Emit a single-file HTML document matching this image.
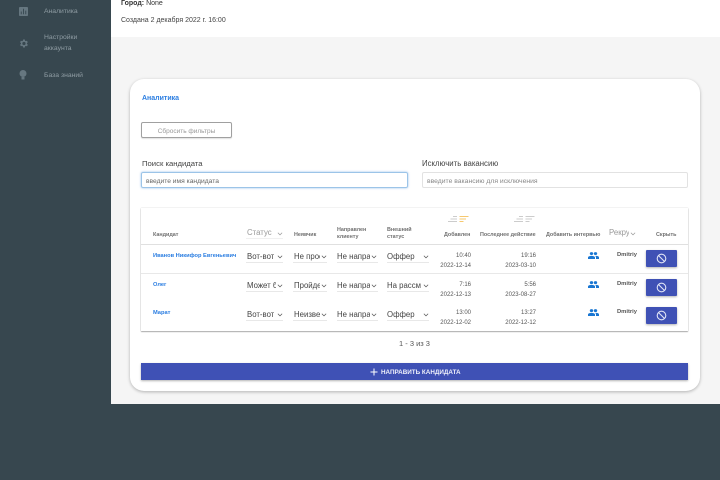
<!DOCTYPE html>
<html lang="ru"><head><meta charset="utf-8"><title>Аналитика</title>
<style>
*{box-sizing:border-box}
html,body{margin:0;padding:0;width:720px;height:480px;overflow:hidden;background:#37474f;font-family:"Liberation Sans","DejaVu Sans",sans-serif}
div,svg{position:absolute}
.t{white-space:nowrap;line-height:1}
.side{color:#8f9ca3;font-size:6.800px}
.lab{color:#707070;font-size:5.400px;font-weight:bold}
.sel{font-size:7.800px;color:#444;overflow:hidden;white-space:nowrap;line-height:1;height:10px}
.und{height:1px;background:#e8e8e8}
.chev{width:6px;height:4px}
.name{color:#2a7de1;font-size:5.700px;font-weight:bold}
.time{color:#555;font-size:6px;text-align:right;white-space:nowrap;line-height:1}
.hide{left:646px;width:31px;height:17px;background:#3f51b5;border-radius:1px;box-shadow:0 1px 2px rgba(0,0,0,.3)}
</style></head><body>
<div style="left:111px;top:0;width:609px;height:404px;background:#f5f5f5"></div>
<div style="left:111px;top:0;width:609px;height:37px;background:#fff"></div>

<svg style="left:19px;top:7px" width="9" height="9" viewBox="0 0 10 10"><rect width="10" height="10" rx="1" fill="#667780"/><path d="M2.500 5v3M5 2v6M7.500 4v4" stroke="#37474f" stroke-width="1"/></svg>
<div class="t side" style="left:44px;top:9px">Аналитика</div>
<svg style="left:18px;top:38px" width="11" height="11" viewBox="0 0 24 24"><path fill="#667780" d="M19.400 13a7.500 7.500 0 0 0 0-2l2.100-1.600-2-3.500-2.500 1a7.500 7.500 0 0 0-1.700-1L15 3.200h-4l-.4 2.700a7.500 7.500 0 0 0-1.700 1l-2.500-1-2 3.500L6.500 11a7.500 7.500 0 0 0 0 2l-2.100 1.600 2 3.500 2.500-1a7.500 7.500 0 0 0 1.700 1l.4 2.700h4l.4-2.700a7.500 7.500 0 0 0 1.700-1l2.500 1 2-3.500zM13 15.500a3.500 3.500 0 1 1 0-7 3.500 3.500 0 0 1 0 7z"/></svg>
<div class="t side" style="left:44px;top:35px">Настройки</div>
<div class="t side" style="left:44px;top:46px">аккаунта</div>
<svg style="left:19px;top:70px" width="8" height="10" viewBox="0 0 8 10"><circle cx="4" cy="3.500" r="3.500" fill="#667780"/><rect x="2.500" y="7" width="3" height="2.500" fill="#667780"/></svg>
<div class="t side" style="left:44px;top:73px">База знаний</div>

<div class="t" style="left:121px;top:0;font-size:7px;color:#333"><b>Город:</b> None</div>
<div class="t" style="left:121px;top:17px;font-size:7px;color:#444">Создана 2 декабря 2022 г. 16:00</div>

<div style="left:130px;top:79px;width:570px;height:312px;background:#fff;border-radius:14px;box-shadow:0 1px 3px rgba(0,0,0,.28)"></div>
<div class="t" style="left:142px;top:95px;font-size:7px;font-weight:bold;color:#2a7de1">Аналитика</div>

<div style="left:141px;top:122px;width:91px;height:16px;border:1px solid #a0a0a0;border-radius:2px;box-shadow:0 1px 1px rgba(0,0,0,.12)"></div>
<div class="t" style="left:141px;top:129px;width:91px;text-align:center;font-size:6.500px;color:#999">Сбросить фильтры</div>

<div class="t" style="left:142px;top:160px;font-size:7.700px;color:#444">Поиск кандидата</div>
<div class="t" style="left:422px;top:160px;font-size:7.800px;color:#444">Исключить вакансию</div>
<div style="left:141px;top:172px;width:267px;height:16px;border:1px solid #9cc4e8;border-radius:2px;box-shadow:0 0 2px rgba(80,150,220,.6)"></div>
<div class="t" style="left:146px;top:179px;font-size:6.700px;color:#666">введите имя кандидата</div>
<div style="left:422px;top:172px;width:266px;height:16px;border:1px solid #e2e2e2;border-radius:2px"></div>
<div class="t" style="left:427px;top:179px;font-size:6.800px;color:#888">введите вакансию для исключения</div>

<div style="left:141px;top:208px;width:547px;height:123px;background:#fff;box-shadow:0 0 1px rgba(0,0,0,.25),0 1px 1px rgba(0,0,0,.3)"></div>
<div style="left:141px;top:244px;width:547px;height:1px;background:#e0e0e0"></div>
<div style="left:141px;top:273px;width:547px;height:1px;background:#e8e8e8"></div>

<div class="t lab" style="left:153px;top:233px">Кандидат</div>
<div class="sel" style="left:247px;top:229px;width:26px;color:#999">Статус</div>
<svg class="chev" style="left:277px;top:232px" viewBox="0 0 7 4"><path d="M1 .5l2.500 2.500L6 .5" fill="none" stroke="#999" stroke-width=".8"/></svg>
<div class="und" style="left:246px;top:238px;width:37px;background:#f0f0f0"></div>
<div class="t lab" style="left:294px;top:233px">Неявчик</div>
<div class="t lab" style="left:337px;top:228px">Направлен</div>
<div class="t lab" style="left:337px;top:235px">клиенту</div>
<div class="t lab" style="left:387px;top:228px">Внешний</div>
<div class="t lab" style="left:387px;top:235px">статус</div>
<div class="t lab" style="left:444px;top:233px">Добавлен</div>
<div class="t lab" style="left:480px;top:233px">Последнее действие</div>
<div class="t lab" style="left:546px;top:233px">Добавить интервью</div>
<div class="sel" style="left:609px;top:229px;width:20px;color:#999">Рекруте</div>
<svg class="chev" style="left:630px;top:232px" viewBox="0 0 7 4"><path d="M1 .5l2.500 2.500L6 .5" fill="none" stroke="#999" stroke-width=".8"/></svg>
<div class="t lab" style="left:656px;top:233px">Скрыть</div>

<svg style="left:447px;top:216px;opacity:.75" width="22" height="7" viewBox="0 0 22 7"><path d="M6 .5h4M3.500 3h6.500M1 5.500h9" stroke="#bbb" stroke-width=".9"/><path d="M12.500.5h9M12.500 3h6.500M12.500 5.500h4" stroke="#f4b63f" stroke-width=".9"/></svg>
<svg style="left:513px;top:216px;opacity:.75" width="22" height="7" viewBox="0 0 22 7"><path d="M6 .5h4M3.500 3h6.500M1 5.500h9M12.500.5h9M12.500 3h6.500M12.500 5.500h4" stroke="#bbb" stroke-width=".9"/></svg>

<!-- row 1 -->
<div class="t name" style="left:153px;top:254px">Иванов Никифор Евгеньевич</div>
<div class="sel" style="left:247px;top:253px;width:27px">Вот-вот</div>
<div class="sel" style="left:294px;top:253px;width:26px">Не прое</div>
<div class="sel" style="left:337px;top:253px;width:33px">Не напра</div>
<div class="sel" style="left:387px;top:253px;width:34px">Оффер</div>
<div class="und" style="left:246px;top:262px;width:37px"></div><div class="und" style="left:293px;top:262px;width:34px"></div><div class="und" style="left:337px;top:262px;width:41px"></div><div class="und" style="left:387px;top:262px;width:42px"></div>
<svg class="chev" style="left:277px;top:255px" viewBox="0 0 7 4"><path d="M1 .5l2.500 2.500L6 .5" fill="none" stroke="#555" stroke-width=".8"/></svg>
<svg class="chev" style="left:321px;top:255px" viewBox="0 0 7 4"><path d="M1 .5l2.500 2.500L6 .5" fill="none" stroke="#555" stroke-width=".8"/></svg>
<svg class="chev" style="left:371px;top:255px" viewBox="0 0 7 4"><path d="M1 .5l2.500 2.500L6 .5" fill="none" stroke="#555" stroke-width=".8"/></svg>
<svg class="chev" style="left:423px;top:255px" viewBox="0 0 7 4"><path d="M1 .5l2.500 2.500L6 .5" fill="none" stroke="#555" stroke-width=".8"/></svg>
<div class="time" style="left:430px;top:253px;width:41px">10:40</div><div class="time" style="left:430px;top:263px;width:41px">2022-12-14</div>
<div class="time" style="left:495px;top:253px;width:41px">19:16</div><div class="time" style="left:495px;top:263px;width:41px">2023-03-10</div>
<svg style="left:588px;top:252px" width="11" height="7" viewBox="0 0 11 8" preserveAspectRatio="none"><path fill="#1976d2" d="M3.500 3.500a1.700 1.700 0 1 0 0-3.400 1.700 1.700 0 0 0 0 3.400zm4 0a1.700 1.700 0 1 0 0-3.400 1.700 1.700 0 0 0 0 3.400zM0 8V6.200C0 5 2 4.400 3.500 4.400S7 5 7 6.200V8zm8 0V6.200c0-.7-.3-1.200-.8-1.700 2-.3 3.800.4 3.800 1.700V8z"/></svg>
<div class="t" style="left:617px;top:253px;font-size:5.800px;font-weight:bold;color:#555">Dmitriy</div>
<div class="hide" style="top:250px"></div>
<svg style="left:656px;top:253px" width="11" height="11" viewBox="0 0 11 11"><circle cx="5.500" cy="5.500" r="4.300" fill="none" stroke="#dfe3f5" stroke-width="1.100"/><path d="M2.500 2.500l6 6" stroke="#dfe3f5" stroke-width="1.100"/></svg>

<!-- row 2 -->
<div class="t name" style="left:153px;top:283px">Олег</div>
<div class="sel" style="left:247px;top:282px;width:29px">Может б</div>
<div class="sel" style="left:294px;top:282px;width:26px">Пройде</div>
<div class="sel" style="left:337px;top:282px;width:33px">Не напра</div>
<div class="sel" style="left:387px;top:282px;width:34px">На рассм</div>
<div class="und" style="left:246px;top:291px;width:37px"></div><div class="und" style="left:293px;top:291px;width:34px"></div><div class="und" style="left:337px;top:291px;width:41px"></div><div class="und" style="left:387px;top:291px;width:42px"></div>
<svg class="chev" style="left:277px;top:284px" viewBox="0 0 7 4"><path d="M1 .5l2.500 2.500L6 .5" fill="none" stroke="#555" stroke-width=".8"/></svg>
<svg class="chev" style="left:321px;top:284px" viewBox="0 0 7 4"><path d="M1 .5l2.500 2.500L6 .5" fill="none" stroke="#555" stroke-width=".8"/></svg>
<svg class="chev" style="left:371px;top:284px" viewBox="0 0 7 4"><path d="M1 .5l2.500 2.500L6 .5" fill="none" stroke="#555" stroke-width=".8"/></svg>
<svg class="chev" style="left:423px;top:284px" viewBox="0 0 7 4"><path d="M1 .5l2.500 2.500L6 .5" fill="none" stroke="#555" stroke-width=".8"/></svg>
<div class="time" style="left:430px;top:282px;width:41px">7:16</div><div class="time" style="left:430px;top:292px;width:41px">2022-12-13</div>
<div class="time" style="left:495px;top:282px;width:41px">5:56</div><div class="time" style="left:495px;top:292px;width:41px">2023-08-27</div>
<svg style="left:588px;top:281px" width="11" height="7" viewBox="0 0 11 8" preserveAspectRatio="none"><path fill="#1976d2" d="M3.500 3.500a1.700 1.700 0 1 0 0-3.400 1.700 1.700 0 0 0 0 3.400zm4 0a1.700 1.700 0 1 0 0-3.400 1.700 1.700 0 0 0 0 3.400zM0 8V6.200C0 5 2 4.400 3.500 4.400S7 5 7 6.200V8zm8 0V6.200c0-.7-.3-1.200-.8-1.700 2-.3 3.800.4 3.800 1.700V8z"/></svg>
<div class="t" style="left:617px;top:282px;font-size:5.800px;font-weight:bold;color:#555">Dmitriy</div>
<div class="hide" style="top:279px"></div>
<svg style="left:656px;top:282px" width="11" height="11" viewBox="0 0 11 11"><circle cx="5.500" cy="5.500" r="4.300" fill="none" stroke="#dfe3f5" stroke-width="1.100"/><path d="M2.500 2.500l6 6" stroke="#dfe3f5" stroke-width="1.100"/></svg>

<!-- row 3 -->
<div class="t name" style="left:153px;top:311px">Марат</div>
<div class="sel" style="left:247px;top:311px;width:27px">Вот-вот</div>
<div class="sel" style="left:294px;top:311px;width:26px">Неизве</div>
<div class="sel" style="left:337px;top:311px;width:33px">Не напра</div>
<div class="sel" style="left:387px;top:311px;width:34px">Оффер</div>
<div class="und" style="left:246px;top:320px;width:37px"></div><div class="und" style="left:293px;top:320px;width:34px"></div><div class="und" style="left:337px;top:320px;width:41px"></div><div class="und" style="left:387px;top:320px;width:42px"></div>
<svg class="chev" style="left:277px;top:313px" viewBox="0 0 7 4"><path d="M1 .5l2.500 2.500L6 .5" fill="none" stroke="#555" stroke-width=".8"/></svg>
<svg class="chev" style="left:321px;top:313px" viewBox="0 0 7 4"><path d="M1 .5l2.500 2.500L6 .5" fill="none" stroke="#555" stroke-width=".8"/></svg>
<svg class="chev" style="left:371px;top:313px" viewBox="0 0 7 4"><path d="M1 .5l2.500 2.500L6 .5" fill="none" stroke="#555" stroke-width=".8"/></svg>
<svg class="chev" style="left:423px;top:313px" viewBox="0 0 7 4"><path d="M1 .5l2.500 2.500L6 .5" fill="none" stroke="#555" stroke-width=".8"/></svg>
<div class="time" style="left:430px;top:310px;width:41px">13:00</div><div class="time" style="left:430px;top:320px;width:41px">2022-12-02</div>
<div class="time" style="left:495px;top:310px;width:41px">13:27</div><div class="time" style="left:495px;top:320px;width:41px">2022-12-12</div>
<svg style="left:588px;top:309px" width="11" height="7" viewBox="0 0 11 8" preserveAspectRatio="none"><path fill="#1976d2" d="M3.500 3.500a1.700 1.700 0 1 0 0-3.400 1.700 1.700 0 0 0 0 3.400zm4 0a1.700 1.700 0 1 0 0-3.400 1.700 1.700 0 0 0 0 3.400zM0 8V6.200C0 5 2 4.400 3.500 4.400S7 5 7 6.200V8zm8 0V6.200c0-.7-.3-1.200-.8-1.700 2-.3 3.800.4 3.800 1.700V8z"/></svg>
<div class="t" style="left:617px;top:310px;font-size:5.800px;font-weight:bold;color:#555">Dmitriy</div>
<div class="hide" style="top:307px"></div>
<svg style="left:656px;top:310px" width="11" height="11" viewBox="0 0 11 11"><circle cx="5.500" cy="5.500" r="4.300" fill="none" stroke="#dfe3f5" stroke-width="1.100"/><path d="M2.500 2.500l6 6" stroke="#dfe3f5" stroke-width="1.100"/></svg>

<div class="t" style="left:141px;top:340px;width:547px;text-align:center;font-size:7.500px;color:#555">1 - 3 из 3</div>

<div style="left:141px;top:363px;width:547px;height:17px;background:#3f51b5;box-shadow:0 1px 2px rgba(0,0,0,.3)"></div>
<svg style="left:370px;top:368px" width="8" height="8" viewBox="0 0 8 8"><path d="M4 .5v7M.5 4h7" stroke="#fff" stroke-width="1"/></svg>
<div class="t" style="left:381px;top:370px;font-size:6.300px;font-weight:bold;color:#eef0fa">НАПРАВИТЬ КАНДИДАТА</div>
</body></html>
